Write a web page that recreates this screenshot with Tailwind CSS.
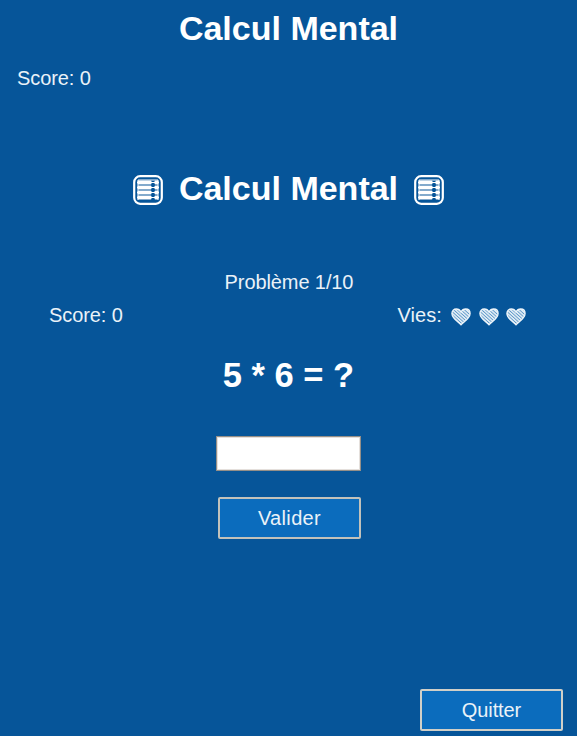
<!DOCTYPE html>
<html lang="fr">
<head>
<meta charset="utf-8">
<title>Calcul Mental</title>
<script src="https://cdn.jsdelivr.net/npm/@tailwindcss/browser@4"></script>
</head>
<body class="bg-[#065599]">
<svg class="absolute size-0" aria-hidden="true">
  <defs>
    <pattern id="hatch" width="2.4" height="2.4" patternUnits="userSpaceOnUse" patternTransform="rotate(-48)">
      <rect width="2.4" height="2.4" fill="#e6f0f7"/>
      <rect width="0.9" height="2.4" fill="#5b96c8"/>
    </pattern>
    <symbol id="heart" viewBox="0 0 20 18">
      <path d="M10 16.8C7.5 14 .9 10.5.9 5.5.9 2.8 2.8 1 5.3 1 7.6 1 9.1 2.2 10 4c.9-1.8 2.4-3 4.7-3 2.5 0 4.4 1.8 4.4 4.5 0 5-6.6 8.5-9.1 11.3Z" fill="url(#hatch)" stroke="#eef5fa" stroke-width="1.3"/>
    </symbol>
    <symbol id="abacus" viewBox="0 0 30 30">
      <rect x="1.2" y="1.2" width="27.6" height="27.6" rx="6" fill="none" stroke="#fff" stroke-width="2.2"/>
      <path d="M5 5h20M5 5v20M25 5v20" stroke="#fff" stroke-width="1"/>
      <path d="M4 7.5h22M4 12.5h22M4 17.5h22M4 22.5h22" stroke="#fff" stroke-width="1"/>
      <g fill="#fff">
        <rect x="4.5" y="5.5" width="14" height="4" rx="1"/><rect x="21.500" y="5.5" width="4" height="4" rx="1"/>
        <rect x="4.5" y="10.5" width="14" height="4" rx="1"/><rect x="21.500" y="10.5" width="4" height="4" rx="1"/>
        <rect x="4.5" y="15.5" width="14" height="4" rx="1"/><rect x="21.500" y="15.5" width="4" height="4" rx="1"/>
        <rect x="4.5" y="20.5" width="14" height="4" rx="1"/><rect x="21.500" y="20.5" width="4" height="4" rx="1"/>
      </g>
    </symbol>
  </defs>
</svg>
<main class="flex h-[736px] w-[577px] flex-col overflow-hidden bg-[#065599] font-['Liberation_Sans',Arial,sans-serif] text-[20px] leading-6 tracking-[-0.1px] text-[#eaf2f8]">
  <h1 class="pt-2 text-center text-[34px] font-bold leading-10 tracking-normal text-white">Calcul Mental</h1>
  <p class="pl-[17px] pt-[18px]">Score: 0</p>
  <h2 class="mt-[78px] flex items-center justify-center text-[34px] font-bold leading-10 tracking-normal text-white">
    <svg class="mt-1 mr-4 size-[30px]"><use href="#abacus"/></svg>
    Calcul Mental
    <svg class="mt-1 ml-4 size-[30px]"><use href="#abacus"/></svg>
  </h2>
  <p class="mt-[62px] pl-px text-center">Problème 1/10</p>
  <div class="mt-[9px] flex justify-between pr-[51px] pl-[49px]">
    <span>Score: 0</span>
    <span class="flex items-center"><span class="tracking-[0.1px]">Vies:</span>
      <span class="mt-1 ml-[9px] flex gap-[7.5px]">
        <svg class="h-[18px] w-5"><use href="#heart"/></svg>
        <svg class="h-[18px] w-5"><use href="#heart"/></svg>
        <svg class="h-[18px] w-5"><use href="#heart"/></svg>
      </span>
    </span>
  </div>
  <p class="mt-7 text-center text-[34.5px] font-bold leading-10 tracking-normal text-white">5 * 6 = ?</p>
  <input aria-label="Réponse" class="mt-[41px] ml-[216px] h-[35px] w-[145px] border border-[#958f88] bg-white px-2 text-black shadow-[inset_0_0_0_1px_#e5e0dc] outline-none">
  <button class="mt-[26px] ml-[218px] h-[42px] w-[143px] rounded-[2px] border-2 border-[#c2c2bb] bg-[#0b6cbd] tracking-[0.35px]">Valider</button>
  <button class="mt-auto mr-[14px] mb-[5px] h-[42px] w-[143px] self-end rounded-[2px] border-2 border-[#d0cfc8] bg-[#0b6cbd]">Quitter</button>
</main>
</body>
</html>
